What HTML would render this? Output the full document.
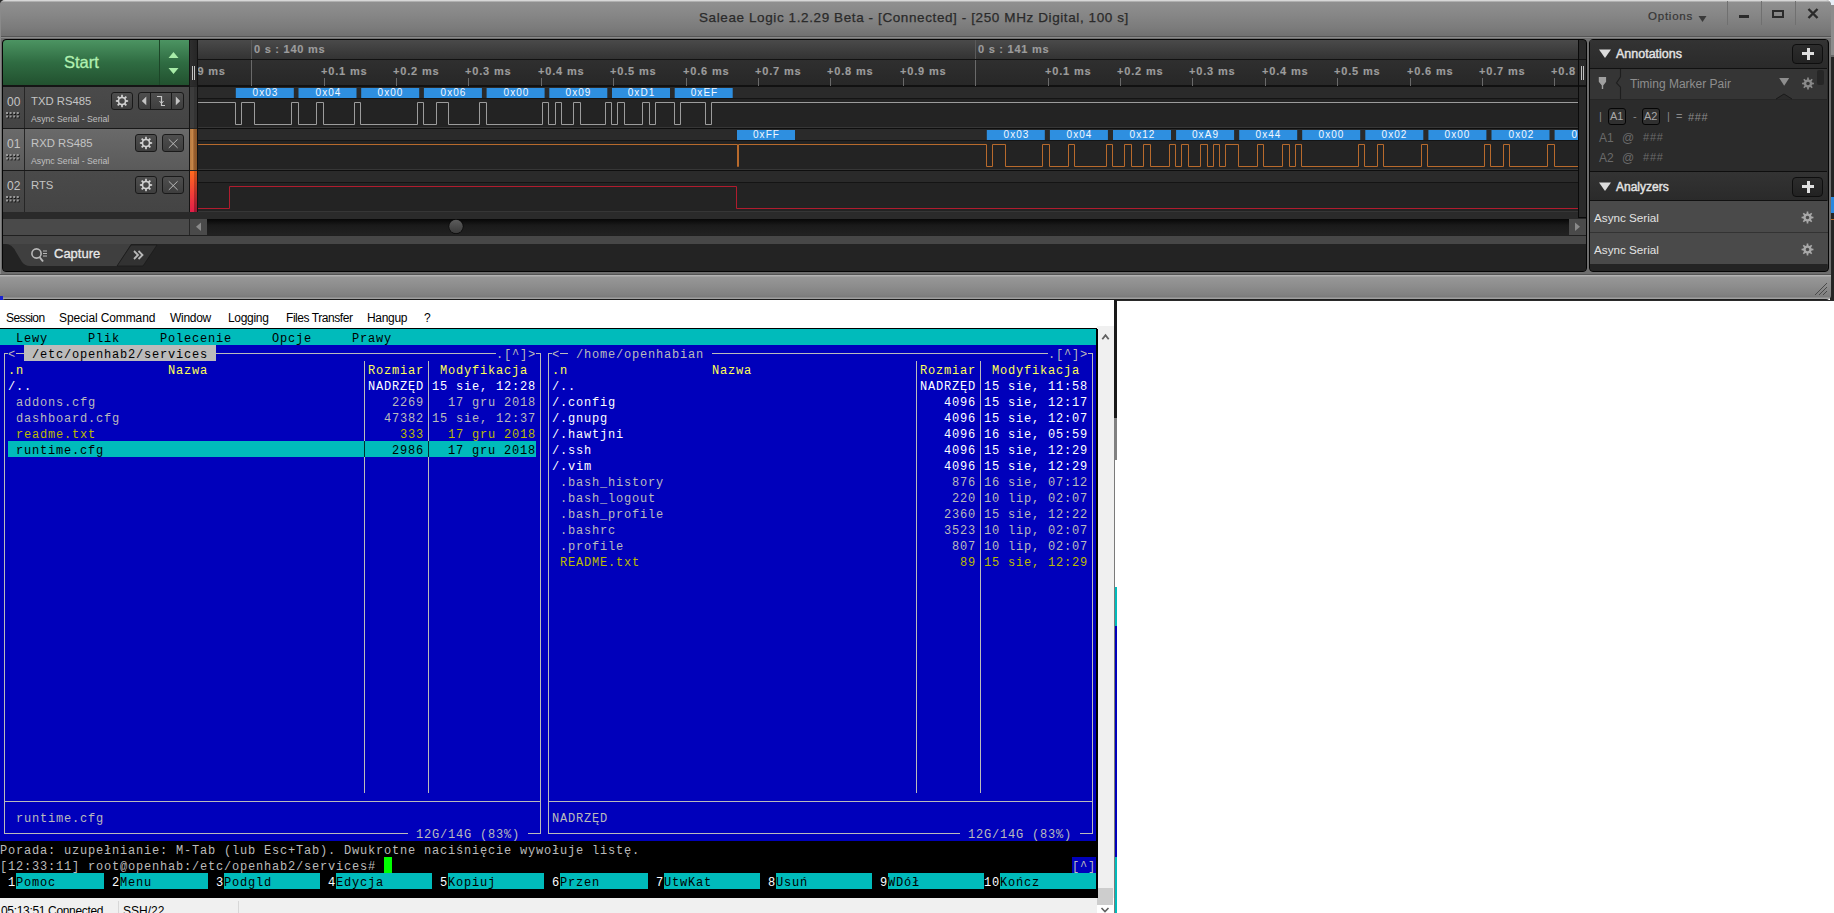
<!DOCTYPE html><html><head><meta charset="utf-8"><style>
*{margin:0;padding:0;box-sizing:border-box}
html,body{width:1834px;height:913px;overflow:hidden;background:#fff}
body{position:relative;font-family:"Liberation Sans",sans-serif}
.a{position:absolute}
.t{position:absolute;white-space:pre;line-height:1}
.m{font-family:"Liberation Mono",monospace}
svg{position:absolute;overflow:visible}
</style></head><body>
<div class="a" style="left:1830px;top:0px;width:4px;height:300px;background:#242424"></div>
<div class="a" style="left:1830px;top:5px;width:4px;height:50px;background:#8c8c8c"></div>
<div class="a" style="left:1830px;top:0px;width:4px;height:5px;background:#e6eef6"></div>
<div class="a" style="left:0px;top:0px;width:4px;height:4px;background:#2a2a2a"></div>
<div class="a" style="left:1831px;top:197px;width:3px;height:16px;background:#2a88e0"></div>
<div class="a" style="left:1831px;top:219px;width:3px;height:1px;background:#b86a2c"></div>
<div class="a" style="left:1831px;top:55px;width:3px;height:2px;background:#6a6a6a"></div>
<div class="a" style="left:0;top:0;width:1831px;height:300px;border-radius:5px 5px 5px 5px;overflow:hidden;background:#6e6e6e">
<div class="a" style="left:0px;top:0px;width:1831px;height:39px;background:linear-gradient(#dcdcdc 0px,#d0d0d0 1px,#8f8f8f 2px,#878787 14px,#7b7b7b 28px,#717171 35.5px,#555 36px,#555 37px,#8a8a8a 37px,#8a8a8a 38px,#6e6e6e 38px)"></div>
<div class="a" style="left:0px;top:0px;width:1px;height:300px;background:#8a8a8a"></div>
<div class="t" style="left:699px;top:10.5px;font-size:13.5px;letter-spacing:0.6px;color:#2a2a2a;-webkit-text-stroke:0.25px #2a2a2a">Saleae Logic 1.2.29 Beta - [Connected] - [250 MHz Digital, 100 s]</div>
<div class="t" style="left:1648px;top:11.3px;font-size:11.5px;letter-spacing:0.77px;color:#363636;-webkit-text-stroke:0.2px #363636">Options</div>
<svg style="left:1698px;top:15px" width="10" height="8"><path d="M0.5,1 L8.5,1 L4.5,7Z" fill="#3a3a3a"/></svg>
<div class="a" style="left:1727px;top:1px;width:1px;height:24px;background:#707070"></div>
<div class="a" style="left:1761px;top:1px;width:1px;height:24px;background:#707070"></div>
<div class="a" style="left:1795px;top:1px;width:1px;height:24px;background:#707070"></div>
<div class="a" style="left:1739px;top:15px;width:10px;height:3px;background:#2a2a2a"></div>
<div class="a" style="left:1772px;top:10px;width:12px;height:8px;border:2px solid #2a2a2a"></div>
<svg style="left:1806px;top:7px" width="14" height="13"><path d="M2.5,2 L11.5,11 M11.5,2 L2.5,11" stroke="#2a2a2a" stroke-width="2.4"/></svg>
<div class="a" style="left:0px;top:274px;width:1831px;height:26px;background:linear-gradient(#555 0px,#555 1px,#b4b4b4 1px,#b0b0b0 2px,#979797 3px,#8d8d8d 12px,#818181 21px,#7a7a7a 23px,#a0a0a0 24px,#a0a0a0 24.5px,#1e1e1e 25px)"></div>
<div class="a" style="left:2px;top:39px;width:1585px;height:233px;background:#262626;border:1px solid #050505;border-radius:4px"></div>
<div class="a" style="left:1589px;top:39px;width:240px;height:233px;background:#2b2b2b;border:1px solid #050505;border-radius:4px"></div>
</div>
<div class="a" style="left:3px;top:40px;width:186px;height:45px;background:linear-gradient(#4c9462,#2f6c42 50%,#22512f);border-radius:4px 0 0 0"></div>
<div class="a" style="left:158.5px;top:40px;width:1.2px;height:45px;background:#1c4628"></div>
<div class="t" style="left:64px;top:53.5px;font-size:16.5px;color:#b0f0b0;-webkit-text-stroke:0.3px #b0f0b0">Start</div>
<svg style="left:168px;top:51px" width="12" height="24"><path d="M0.5,7 L10.5,7 L5.5,1Z M0.5,17 L10.5,17 L5.5,23Z" fill="#a8eca8"/></svg>
<div class="a" style="left:3px;top:85px;width:186px;height:2px;background:#151515"></div>
<div class="a" style="left:3px;top:87px;width:186px;height:41px;background:linear-gradient(#4a4a4a,#444)"></div>
<div class="a" style="left:3px;top:128px;width:186px;height:1px;background:#181818"></div>
<div class="a" style="left:24px;top:87px;width:1px;height:41px;background:#262626"></div>
<div class="t" style="left:7px;top:96px;font-size:12px;color:#c4c4c4">00</div>
<svg style="left:6px;top:112px" width="16" height="8"><rect x="0.8" y="0.8" width="2" height="2" fill="#101010"/><rect x="0.0" y="0.0" width="2" height="2" fill="#9a9a9a"/><rect x="0.8" y="4.3" width="2" height="2" fill="#101010"/><rect x="0.0" y="3.5" width="2" height="2" fill="#9a9a9a"/><rect x="4.4" y="0.8" width="2" height="2" fill="#101010"/><rect x="3.6" y="0.0" width="2" height="2" fill="#9a9a9a"/><rect x="4.4" y="4.3" width="2" height="2" fill="#101010"/><rect x="3.6" y="3.5" width="2" height="2" fill="#9a9a9a"/><rect x="8.0" y="0.8" width="2" height="2" fill="#101010"/><rect x="7.2" y="0.0" width="2" height="2" fill="#9a9a9a"/><rect x="8.0" y="4.3" width="2" height="2" fill="#101010"/><rect x="7.2" y="3.5" width="2" height="2" fill="#9a9a9a"/><rect x="11.600000000000001" y="0.8" width="2" height="2" fill="#101010"/><rect x="10.8" y="0.0" width="2" height="2" fill="#9a9a9a"/><rect x="11.600000000000001" y="4.3" width="2" height="2" fill="#101010"/><rect x="10.8" y="3.5" width="2" height="2" fill="#9a9a9a"/></svg>
<div class="t" style="left:31px;top:96px;font-size:11.3px;color:#c4c4c4">TXD RS485</div>
<div class="t" style="left:31px;top:115px;font-size:8.7px;color:#c0c0c0">Async Serial - Serial</div>
<div class="a" style="left:111px;top:92px;width:22px;height:18px;background:linear-gradient(#4e4e4e,#3e3e3e);border:1px solid #1a1a1a;border-radius:3px"></div>
<svg style="left:0;top:0" width="1" height="1"><path d="M121.09,96.76 L121.17,94.86 L122.83,94.86 L122.91,96.76 L124.35,97.35 L125.76,96.07 L126.93,97.24 L125.65,98.65 L126.24,100.09 L128.14,100.17 L128.14,101.83 L126.24,101.91 L125.65,103.35 L126.93,104.76 L125.76,105.93 L124.35,104.65 L122.91,105.24 L122.83,107.14 L121.17,107.14 L121.09,105.24 L119.65,104.65 L118.24,105.93 L117.07,104.76 L118.35,103.35 L117.76,101.91 L115.86,101.83 L115.86,100.17 L117.76,100.09 L118.35,98.65 L117.07,97.24 L118.24,96.07 L119.65,97.35Z M124.73,101.00 A2.73,2.73 0 1 0 119.27,101.00 A2.73,2.73 0 1 0 124.73,101.00Z" fill="#d0d0d0" fill-rule="evenodd"/></svg>
<div class="a" style="left:138px;top:92px;width:46px;height:18px;background:linear-gradient(#4e4e4e,#3e3e3e);border:1px solid #1a1a1a;border-radius:3px"></div>
<div class="a" style="left:150px;top:93px;width:1px;height:16px;background:#1a1a1a"></div>
<div class="a" style="left:171px;top:93px;width:1px;height:16px;background:#1a1a1a"></div>
<svg style="left:0;top:0" width="1" height="1"><path d="M146.3,96.6 L146.3,105.2 L141.8,100.9Z M175.8,96.6 L175.8,105.2 L180.2,100.9Z" fill="#c4c4c4"/><path d="M157,96.5 L161.5,96.5 L161.5,105.5 L165,105.5" fill="none" stroke="#c8c8c8" stroke-width="1.2"/><path d="M159.5,101 L161.5,103.5 L163.5,101" fill="none" stroke="#c8c8c8" stroke-width="1"/></svg>
<div class="a" style="left:3px;top:129px;width:186px;height:41px;background:linear-gradient(#6a6a6a,#5a5a5a)"></div>
<div class="a" style="left:3px;top:170px;width:186px;height:1px;background:#181818"></div>
<div class="a" style="left:24px;top:129px;width:1px;height:41px;background:#262626"></div>
<div class="t" style="left:7px;top:138px;font-size:12px;color:#c4c4c4">01</div>
<svg style="left:6px;top:154px" width="16" height="8"><rect x="0.8" y="0.8" width="2" height="2" fill="#101010"/><rect x="0.0" y="0.0" width="2" height="2" fill="#9a9a9a"/><rect x="0.8" y="4.3" width="2" height="2" fill="#101010"/><rect x="0.0" y="3.5" width="2" height="2" fill="#9a9a9a"/><rect x="4.4" y="0.8" width="2" height="2" fill="#101010"/><rect x="3.6" y="0.0" width="2" height="2" fill="#9a9a9a"/><rect x="4.4" y="4.3" width="2" height="2" fill="#101010"/><rect x="3.6" y="3.5" width="2" height="2" fill="#9a9a9a"/><rect x="8.0" y="0.8" width="2" height="2" fill="#101010"/><rect x="7.2" y="0.0" width="2" height="2" fill="#9a9a9a"/><rect x="8.0" y="4.3" width="2" height="2" fill="#101010"/><rect x="7.2" y="3.5" width="2" height="2" fill="#9a9a9a"/><rect x="11.600000000000001" y="0.8" width="2" height="2" fill="#101010"/><rect x="10.8" y="0.0" width="2" height="2" fill="#9a9a9a"/><rect x="11.600000000000001" y="4.3" width="2" height="2" fill="#101010"/><rect x="10.8" y="3.5" width="2" height="2" fill="#9a9a9a"/></svg>
<div class="t" style="left:31px;top:138px;font-size:11.3px;color:#c4c4c4">RXD RS485</div>
<div class="t" style="left:31px;top:157px;font-size:8.7px;color:#c0c0c0">Async Serial - Serial</div>
<div class="a" style="left:135px;top:134px;width:22px;height:18px;background:linear-gradient(#4e4e4e,#3e3e3e);border:1px solid #1a1a1a;border-radius:3px"></div>
<svg style="left:0;top:0" width="1" height="1"><path d="M145.09,138.76 L145.17,136.86 L146.83,136.86 L146.91,138.76 L148.35,139.35 L149.76,138.07 L150.93,139.24 L149.65,140.65 L150.24,142.09 L152.14,142.17 L152.14,143.83 L150.24,143.91 L149.65,145.35 L150.93,146.76 L149.76,147.93 L148.35,146.65 L146.91,147.24 L146.83,149.14 L145.17,149.14 L145.09,147.24 L143.65,146.65 L142.24,147.93 L141.07,146.76 L142.35,145.35 L141.76,143.91 L139.86,143.83 L139.86,142.17 L141.76,142.09 L142.35,140.65 L141.07,139.24 L142.24,138.07 L143.65,139.35Z M148.73,143.00 A2.73,2.73 0 1 0 143.27,143.00 A2.73,2.73 0 1 0 148.73,143.00Z" fill="#d0d0d0" fill-rule="evenodd"/></svg>
<div class="a" style="left:162px;top:134px;width:22px;height:18px;background:linear-gradient(#4e4e4e,#3e3e3e);border:1px solid #1a1a1a;border-radius:3px"></div>
<svg style="left:0;top:0" width="1" height="1"><path d="M168.8,139.3 L177.6,147.9 M177.6,139.3 L168.8,147.9" stroke="#c4c4c4" stroke-width="0.9"/></svg>
<div class="a" style="left:3px;top:171px;width:186px;height:41px;background:linear-gradient(#4a4a4a,#444)"></div>
<div class="a" style="left:3px;top:212px;width:186px;height:1px;background:#181818"></div>
<div class="a" style="left:24px;top:171px;width:1px;height:41px;background:#262626"></div>
<div class="t" style="left:7px;top:180px;font-size:12px;color:#c4c4c4">02</div>
<svg style="left:6px;top:196px" width="16" height="8"><rect x="0.8" y="0.8" width="2" height="2" fill="#101010"/><rect x="0.0" y="0.0" width="2" height="2" fill="#9a9a9a"/><rect x="0.8" y="4.3" width="2" height="2" fill="#101010"/><rect x="0.0" y="3.5" width="2" height="2" fill="#9a9a9a"/><rect x="4.4" y="0.8" width="2" height="2" fill="#101010"/><rect x="3.6" y="0.0" width="2" height="2" fill="#9a9a9a"/><rect x="4.4" y="4.3" width="2" height="2" fill="#101010"/><rect x="3.6" y="3.5" width="2" height="2" fill="#9a9a9a"/><rect x="8.0" y="0.8" width="2" height="2" fill="#101010"/><rect x="7.2" y="0.0" width="2" height="2" fill="#9a9a9a"/><rect x="8.0" y="4.3" width="2" height="2" fill="#101010"/><rect x="7.2" y="3.5" width="2" height="2" fill="#9a9a9a"/><rect x="11.600000000000001" y="0.8" width="2" height="2" fill="#101010"/><rect x="10.8" y="0.0" width="2" height="2" fill="#9a9a9a"/><rect x="11.600000000000001" y="4.3" width="2" height="2" fill="#101010"/><rect x="10.8" y="3.5" width="2" height="2" fill="#9a9a9a"/></svg>
<div class="t" style="left:31px;top:180px;font-size:11.3px;color:#c4c4c4">RTS</div>
<div class="a" style="left:135px;top:176px;width:22px;height:18px;background:linear-gradient(#4e4e4e,#3e3e3e);border:1px solid #1a1a1a;border-radius:3px"></div>
<svg style="left:0;top:0" width="1" height="1"><path d="M145.09,180.76 L145.17,178.86 L146.83,178.86 L146.91,180.76 L148.35,181.35 L149.76,180.07 L150.93,181.24 L149.65,182.65 L150.24,184.09 L152.14,184.17 L152.14,185.83 L150.24,185.91 L149.65,187.35 L150.93,188.76 L149.76,189.93 L148.35,188.65 L146.91,189.24 L146.83,191.14 L145.17,191.14 L145.09,189.24 L143.65,188.65 L142.24,189.93 L141.07,188.76 L142.35,187.35 L141.76,185.91 L139.86,185.83 L139.86,184.17 L141.76,184.09 L142.35,182.65 L141.07,181.24 L142.24,180.07 L143.65,181.35Z M148.73,185.00 A2.73,2.73 0 1 0 143.27,185.00 A2.73,2.73 0 1 0 148.73,185.00Z" fill="#d0d0d0" fill-rule="evenodd"/></svg>
<div class="a" style="left:162px;top:176px;width:22px;height:18px;background:linear-gradient(#4e4e4e,#3e3e3e);border:1px solid #1a1a1a;border-radius:3px"></div>
<svg style="left:0;top:0" width="1" height="1"><path d="M168.8,181.3 L177.6,189.9 M177.6,181.3 L168.8,189.9" stroke="#c4c4c4" stroke-width="0.9"/></svg>
<div class="a" style="left:3px;top:212px;width:186px;height:7px;background:#2a2a2a"></div>
<div class="a" style="left:3px;top:219px;width:186px;height:16px;background:#4a4a4a"></div>
<div class="a" style="left:3px;top:235px;width:1583px;height:1px;background:#202020"></div>
<div class="a" style="left:3px;top:236px;width:1583px;height:8px;background:#474747"></div>
<div class="a" style="left:189px;top:40px;width:1px;height:172px;background:#151515"></div>
<div class="a" style="left:190px;top:40px;width:7px;height:46px;background:linear-gradient(90deg,#2e2e2e,#262626)"></div>
<div class="a" style="left:191.5px;top:66px;width:1.2px;height:14px;background:#c4c4c4"></div>
<div class="a" style="left:194px;top:66px;width:1.2px;height:14px;background:#c4c4c4"></div>
<div class="a" style="left:190px;top:87px;width:7px;height:41px;background:linear-gradient(90deg,#3c3c3c 0,#3c3c3c 50%,#333 50%,#333)"></div>
<div class="a" style="left:190px;top:129px;width:7px;height:41px;background:linear-gradient(90deg,#b87a40 0,#c8884a 40%,#9a6030 55%,#8a5628)"></div>
<div class="a" style="left:190px;top:171px;width:7px;height:41px;background:linear-gradient(#ff6a1e,#f03a3a 60%,#e41e48)"></div>
<div class="a" style="left:194px;top:171px;width:3px;height:41px;background:linear-gradient(rgba(0,0,0,0.18),rgba(0,0,0,0.3))"></div>
<div class="a" style="left:197px;top:40px;width:1px;height:172px;background:#111"></div>
<div class="a" style="left:198px;top:40px;width:1380px;height:19px;background:linear-gradient(#4a4a4a,#333)"></div>
<div class="a" style="left:198px;top:59px;width:1380px;height:1px;background:#121212"></div>
<div class="a" style="left:198px;top:60px;width:1380px;height:26px;background:linear-gradient(#2f2f2f,#272727)"></div>
<div class="a" style="left:198px;top:85px;width:1380px;height:2px;background:#111"></div>
<div class="a" style="left:251px;top:40px;width:1px;height:19px;background:#5a5a5a"></div>
<div class="a" style="left:975px;top:40px;width:1px;height:19px;background:#5a5a5a"></div>
<div class="a" style="left:251px;top:60px;width:1px;height:26px;background:#6a6a6a"></div>
<div class="a" style="left:975px;top:60px;width:1px;height:26px;background:#6a6a6a"></div>
<div class="a" style="left:198px;top:40px;width:1380px;height:46px;overflow:hidden">
<div class="t" style="left:56px;top:4.299999999999997px;font-size:11px;font-weight:bold;letter-spacing:0.75px;color:#9c9c9c;-webkit-text-stroke:0.15px #9c9c9c">0 s : 140 ms</div>
<div class="t" style="left:780px;top:4.299999999999997px;font-size:11px;font-weight:bold;letter-spacing:0.75px;color:#9c9c9c;-webkit-text-stroke:0.15px #9c9c9c">0 s : 141 ms</div>
<div class="t" style="left:-0.5px;top:26.299999999999997px;font-size:11px;font-weight:bold;letter-spacing:0.8px;color:#9c9c9c;-webkit-text-stroke:0.15px #9c9c9c">9 ms</div>
<div class="a" style="left:126px;top:38px;width:1px;height:8px;background:#6a6a6a"></div>
<div class="t" style="left:123px;top:26.299999999999997px;font-size:11px;font-weight:bold;letter-spacing:0.83px;color:#9c9c9c;-webkit-text-stroke:0.15px #9c9c9c">+0.1 ms</div>
<div class="a" style="left:198px;top:38px;width:1px;height:8px;background:#6a6a6a"></div>
<div class="t" style="left:195px;top:26.299999999999997px;font-size:11px;font-weight:bold;letter-spacing:0.83px;color:#9c9c9c;-webkit-text-stroke:0.15px #9c9c9c">+0.2 ms</div>
<div class="a" style="left:270px;top:38px;width:1px;height:8px;background:#6a6a6a"></div>
<div class="t" style="left:267px;top:26.299999999999997px;font-size:11px;font-weight:bold;letter-spacing:0.83px;color:#9c9c9c;-webkit-text-stroke:0.15px #9c9c9c">+0.3 ms</div>
<div class="a" style="left:343px;top:38px;width:1px;height:8px;background:#6a6a6a"></div>
<div class="t" style="left:340px;top:26.299999999999997px;font-size:11px;font-weight:bold;letter-spacing:0.83px;color:#9c9c9c;-webkit-text-stroke:0.15px #9c9c9c">+0.4 ms</div>
<div class="a" style="left:415px;top:38px;width:1px;height:8px;background:#6a6a6a"></div>
<div class="t" style="left:412px;top:26.299999999999997px;font-size:11px;font-weight:bold;letter-spacing:0.83px;color:#9c9c9c;-webkit-text-stroke:0.15px #9c9c9c">+0.5 ms</div>
<div class="a" style="left:488px;top:38px;width:1px;height:8px;background:#6a6a6a"></div>
<div class="t" style="left:485px;top:26.299999999999997px;font-size:11px;font-weight:bold;letter-spacing:0.83px;color:#9c9c9c;-webkit-text-stroke:0.15px #9c9c9c">+0.6 ms</div>
<div class="a" style="left:560px;top:38px;width:1px;height:8px;background:#6a6a6a"></div>
<div class="t" style="left:557px;top:26.299999999999997px;font-size:11px;font-weight:bold;letter-spacing:0.83px;color:#9c9c9c;-webkit-text-stroke:0.15px #9c9c9c">+0.7 ms</div>
<div class="a" style="left:632px;top:38px;width:1px;height:8px;background:#6a6a6a"></div>
<div class="t" style="left:629px;top:26.299999999999997px;font-size:11px;font-weight:bold;letter-spacing:0.83px;color:#9c9c9c;-webkit-text-stroke:0.15px #9c9c9c">+0.8 ms</div>
<div class="a" style="left:705px;top:38px;width:1px;height:8px;background:#6a6a6a"></div>
<div class="t" style="left:702px;top:26.299999999999997px;font-size:11px;font-weight:bold;letter-spacing:0.83px;color:#9c9c9c;-webkit-text-stroke:0.15px #9c9c9c">+0.9 ms</div>
<div class="a" style="left:850px;top:38px;width:1px;height:8px;background:#6a6a6a"></div>
<div class="t" style="left:847px;top:26.299999999999997px;font-size:11px;font-weight:bold;letter-spacing:0.83px;color:#9c9c9c;-webkit-text-stroke:0.15px #9c9c9c">+0.1 ms</div>
<div class="a" style="left:922px;top:38px;width:1px;height:8px;background:#6a6a6a"></div>
<div class="t" style="left:919px;top:26.299999999999997px;font-size:11px;font-weight:bold;letter-spacing:0.83px;color:#9c9c9c;-webkit-text-stroke:0.15px #9c9c9c">+0.2 ms</div>
<div class="a" style="left:994px;top:38px;width:1px;height:8px;background:#6a6a6a"></div>
<div class="t" style="left:991px;top:26.299999999999997px;font-size:11px;font-weight:bold;letter-spacing:0.83px;color:#9c9c9c;-webkit-text-stroke:0.15px #9c9c9c">+0.3 ms</div>
<div class="a" style="left:1067px;top:38px;width:1px;height:8px;background:#6a6a6a"></div>
<div class="t" style="left:1064px;top:26.299999999999997px;font-size:11px;font-weight:bold;letter-spacing:0.83px;color:#9c9c9c;-webkit-text-stroke:0.15px #9c9c9c">+0.4 ms</div>
<div class="a" style="left:1139px;top:38px;width:1px;height:8px;background:#6a6a6a"></div>
<div class="t" style="left:1136px;top:26.299999999999997px;font-size:11px;font-weight:bold;letter-spacing:0.83px;color:#9c9c9c;-webkit-text-stroke:0.15px #9c9c9c">+0.5 ms</div>
<div class="a" style="left:1212px;top:38px;width:1px;height:8px;background:#6a6a6a"></div>
<div class="t" style="left:1209px;top:26.299999999999997px;font-size:11px;font-weight:bold;letter-spacing:0.83px;color:#9c9c9c;-webkit-text-stroke:0.15px #9c9c9c">+0.6 ms</div>
<div class="a" style="left:1284px;top:38px;width:1px;height:8px;background:#6a6a6a"></div>
<div class="t" style="left:1281px;top:26.299999999999997px;font-size:11px;font-weight:bold;letter-spacing:0.83px;color:#9c9c9c;-webkit-text-stroke:0.15px #9c9c9c">+0.7 ms</div>
<div class="a" style="left:1356px;top:38px;width:1px;height:8px;background:#6a6a6a"></div>
<div class="t" style="left:1353px;top:26.299999999999997px;font-size:11px;font-weight:bold;letter-spacing:0.83px;color:#9c9c9c;-webkit-text-stroke:0.15px #9c9c9c">+0.8 ms</div>
</div>
<div class="a" style="left:1578px;top:40px;width:8px;height:172px;background:#2a2a2a;border-radius:0 4px 0 0"></div>
<div class="a" style="left:1578px;top:59px;width:8px;height:1px;background:#121212"></div>
<div class="a" style="left:1578px;top:85px;width:8px;height:2px;background:#111"></div>
<div class="a" style="left:1581px;top:66px;width:1px;height:14px;background:#c0c0c0"></div>
<div class="a" style="left:1583px;top:66px;width:1px;height:14px;background:#c0c0c0"></div>
<div class="a" style="left:1578px;top:40px;width:1px;height:178px;background:#0a0a0a"></div>
<div class="a" style="left:1578px;top:217px;width:8px;height:1px;background:#0a0a0a"></div>
<div class="a" style="left:198px;top:87px;width:1380px;height:11px;background:#2a2a2a"></div>
<div class="a" style="left:198px;top:98px;width:1380px;height:1px;background:#141414"></div>
<div class="a" style="left:198px;top:99px;width:1380px;height:28px;background:#232323"></div>
<div class="a" style="left:198px;top:127px;width:1380px;height:1px;background:#363636"></div>
<div class="a" style="left:198px;top:128px;width:1380px;height:1px;background:#0e0e0e"></div>
<div class="a" style="left:198px;top:129px;width:1380px;height:11px;background:#2a2a2a"></div>
<div class="a" style="left:198px;top:140px;width:1380px;height:1px;background:#141414"></div>
<div class="a" style="left:198px;top:141px;width:1380px;height:28px;background:#232323"></div>
<div class="a" style="left:198px;top:169px;width:1380px;height:1px;background:#363636"></div>
<div class="a" style="left:198px;top:170px;width:1380px;height:1px;background:#0e0e0e"></div>
<div class="a" style="left:198px;top:171px;width:1380px;height:11px;background:#2a2a2a"></div>
<div class="a" style="left:198px;top:182px;width:1380px;height:1px;background:#141414"></div>
<div class="a" style="left:198px;top:183px;width:1380px;height:28px;background:#232323"></div>
<div class="a" style="left:198px;top:211px;width:1380px;height:1px;background:#363636"></div>
<div class="a" style="left:198px;top:212px;width:1380px;height:1px;background:#0e0e0e"></div>
<svg style="left:0;top:0" width="1834" height="300"><defs><clipPath id="tlc"><rect x="198" y="40" width="1380" height="172"/></clipPath></defs><g clip-path="url(#tlc)"><path d="M198,102.5 L235.5,102.5 L235.5,124.5 L241.5,124.5 L241.5,102.5 L254.5,102.5 L254.5,124.5 L291.5,124.5 L291.5,102.5 L298.5,102.5 L298.5,124.5 L316.5,124.5 L316.5,102.5 L323.5,102.5 L323.5,124.5 L354.5,124.5 L354.5,102.5 L360.5,102.5 L360.5,124.5 L417.5,124.5 L417.5,102.5 L423.5,102.5 L423.5,124.5 L436.5,124.5 L436.5,102.5 L448.5,102.5 L448.5,124.5 L479.5,124.5 L479.5,102.5 L486.5,102.5 L486.5,124.5 L542.5,124.5 L542.5,102.5 L548.5,102.5 L548.5,124.5 L555.5,124.5 L555.5,102.5 L561.5,102.5 L561.5,124.5 L573.5,124.5 L573.5,102.5 L580.5,102.5 L580.5,124.5 L605.5,124.5 L605.5,102.5 L611.5,102.5 L611.5,124.5 L617.5,124.5 L617.5,102.5 L624.5,102.5 L624.5,124.5 L642.5,124.5 L642.5,102.5 L649.5,102.5 L649.5,124.5 L655.5,124.5 L655.5,102.5 L674.5,102.5 L674.5,124.5 L680.5,124.5 L680.5,102.5 L705.5,102.5 L705.5,124.5 L711.5,124.5 L711.5,102.5 L1578,102.5" fill="none" stroke="#9c9c9c" stroke-width="1"/><path d="M198,144.5 L737.5,144.5 L737.5,166.5 L738.5,166.5 L738.5,144.5 L986.5,144.5 L986.5,166.5 L992.5,166.5 L992.5,144.5 L1005.5,144.5 L1005.5,166.5 L1042.5,166.5 L1042.5,144.5 L1049.5,144.5 L1049.5,166.5 L1068.5,166.5 L1068.5,144.5 L1074.5,144.5 L1074.5,166.5 L1106.5,166.5 L1106.5,144.5 L1112.5,144.5 L1112.5,166.5 L1124.5,166.5 L1124.5,144.5 L1131.5,144.5 L1131.5,166.5 L1143.5,166.5 L1143.5,144.5 L1150.5,144.5 L1150.5,166.5 L1169.5,166.5 L1169.5,144.5 L1175.5,144.5 L1175.5,166.5 L1181.5,166.5 L1181.5,144.5 L1188.5,144.5 L1188.5,166.5 L1200.5,166.5 L1200.5,144.5 L1207.5,144.5 L1207.5,166.5 L1213.5,166.5 L1213.5,144.5 L1219.5,144.5 L1219.5,166.5 L1225.5,166.5 L1225.5,144.5 L1238.5,144.5 L1238.5,166.5 L1257.5,166.5 L1257.5,144.5 L1263.5,144.5 L1263.5,166.5 L1282.5,166.5 L1282.5,144.5 L1289.5,144.5 L1289.5,166.5 L1295.5,166.5 L1295.5,144.5 L1301.5,144.5 L1301.5,166.5 L1358.5,166.5 L1358.5,144.5 L1364.5,144.5 L1364.5,166.5 L1377.5,166.5 L1377.5,144.5 L1383.5,144.5 L1383.5,166.5 L1421.5,166.5 L1421.5,144.5 L1427.5,144.5 L1427.5,166.5 L1484.5,166.5 L1484.5,144.5 L1490.5,144.5 L1490.5,166.5 L1503.5,166.5 L1503.5,144.5 L1509.5,144.5 L1509.5,166.5 L1547.5,166.5 L1547.5,144.5 L1554.5,144.5 L1554.5,166.5 L1578,166.5" fill="none" stroke="#b86a2c" stroke-width="1"/><path d="M198,208.5 L229.5,208.5 L229.5,186.5 L736.5,186.5 L736.5,208.5 L1578,208.5" fill="none" stroke="#b01c2e" stroke-width="1"/><rect x="235.8" y="88" width="58" height="10" fill="#2e8fe0"/><rect x="298.5" y="88" width="58" height="10" fill="#2e8fe0"/><rect x="361.2" y="88" width="58" height="10" fill="#2e8fe0"/><rect x="423.9" y="88" width="58" height="10" fill="#2e8fe0"/><rect x="486.6" y="88" width="58" height="10" fill="#2e8fe0"/><rect x="549.3" y="88" width="58" height="10" fill="#2e8fe0"/><rect x="612.0" y="88" width="58" height="10" fill="#2e8fe0"/><rect x="674.7" y="88" width="58" height="10" fill="#2e8fe0"/><rect x="737.0" y="130" width="58" height="10" fill="#2e8fe0"/><rect x="986.8" y="130" width="58" height="10" fill="#2e8fe0"/><rect x="1049.9" y="130" width="58" height="10" fill="#2e8fe0"/><rect x="1113.0" y="130" width="58" height="10" fill="#2e8fe0"/><rect x="1176.1" y="130" width="58" height="10" fill="#2e8fe0"/><rect x="1239.2" y="130" width="58" height="10" fill="#2e8fe0"/><rect x="1302.2" y="130" width="58" height="10" fill="#2e8fe0"/><rect x="1365.3" y="130" width="58" height="10" fill="#2e8fe0"/><rect x="1428.4" y="130" width="58" height="10" fill="#2e8fe0"/><rect x="1491.5" y="130" width="58" height="10" fill="#2e8fe0"/><rect x="1554.6" y="130" width="58" height="10" fill="#2e8fe0"/></g></svg>
<div class="a" style="left:198px;top:80px;width:1380px;height:70px;overflow:hidden">
<div class="t" style="left:52px;top:8px;width:30px;text-align:center;font-size:10px;color:#f4f8ff;letter-spacing:1.05px;text-indent:1px">0x03</div>
<div class="t" style="left:115px;top:8px;width:30px;text-align:center;font-size:10px;color:#f4f8ff;letter-spacing:1.05px;text-indent:1px">0x04</div>
<div class="t" style="left:177px;top:8px;width:30px;text-align:center;font-size:10px;color:#f4f8ff;letter-spacing:1.05px;text-indent:1px">0x00</div>
<div class="t" style="left:240px;top:8px;width:30px;text-align:center;font-size:10px;color:#f4f8ff;letter-spacing:1.05px;text-indent:1px">0x06</div>
<div class="t" style="left:303px;top:8px;width:30px;text-align:center;font-size:10px;color:#f4f8ff;letter-spacing:1.05px;text-indent:1px">0x00</div>
<div class="t" style="left:365px;top:8px;width:30px;text-align:center;font-size:10px;color:#f4f8ff;letter-spacing:1.05px;text-indent:1px">0x09</div>
<div class="t" style="left:428px;top:8px;width:30px;text-align:center;font-size:10px;color:#f4f8ff;letter-spacing:1.05px;text-indent:1px">0xD1</div>
<div class="t" style="left:491px;top:8px;width:30px;text-align:center;font-size:10px;color:#f4f8ff;letter-spacing:1.05px;text-indent:1px">0xEF</div>
<div class="t" style="left:553px;top:50px;width:30px;text-align:center;font-size:10px;color:#f4f8ff;letter-spacing:1.05px;text-indent:1px">0xFF</div>
<div class="t" style="left:803px;top:50px;width:30px;text-align:center;font-size:10px;color:#f4f8ff;letter-spacing:1.05px;text-indent:1px">0x03</div>
<div class="t" style="left:866px;top:50px;width:30px;text-align:center;font-size:10px;color:#f4f8ff;letter-spacing:1.05px;text-indent:1px">0x04</div>
<div class="t" style="left:929px;top:50px;width:30px;text-align:center;font-size:10px;color:#f4f8ff;letter-spacing:1.05px;text-indent:1px">0x12</div>
<div class="t" style="left:992px;top:50px;width:30px;text-align:center;font-size:10px;color:#f4f8ff;letter-spacing:1.05px;text-indent:1px">0xA9</div>
<div class="t" style="left:1055px;top:50px;width:30px;text-align:center;font-size:10px;color:#f4f8ff;letter-spacing:1.05px;text-indent:1px">0x44</div>
<div class="t" style="left:1118px;top:50px;width:30px;text-align:center;font-size:10px;color:#f4f8ff;letter-spacing:1.05px;text-indent:1px">0x00</div>
<div class="t" style="left:1181px;top:50px;width:30px;text-align:center;font-size:10px;color:#f4f8ff;letter-spacing:1.05px;text-indent:1px">0x02</div>
<div class="t" style="left:1244px;top:50px;width:30px;text-align:center;font-size:10px;color:#f4f8ff;letter-spacing:1.05px;text-indent:1px">0x00</div>
<div class="t" style="left:1308px;top:50px;width:30px;text-align:center;font-size:10px;color:#f4f8ff;letter-spacing:1.05px;text-indent:1px">0x02</div>
<div class="t" style="left:1371px;top:50px;width:30px;text-align:center;font-size:10px;color:#f4f8ff;letter-spacing:1.05px;text-indent:1px">0x00</div>
</div>
<div class="a" style="left:189px;top:212px;width:1389px;height:7px;background:#2a2a2a"></div>
<div class="a" style="left:1578px;top:212px;width:8px;height:5px;background:#2a2a2a"></div>
<div class="a" style="left:1578px;top:212px;width:1px;height:6px;background:#0a0a0a"></div>
<div class="a" style="left:1578px;top:217px;width:8px;height:1px;background:#0a0a0a"></div>
<div class="a" style="left:190px;top:219px;width:17px;height:16px;background:#4a4a4a"></div>
<div class="a" style="left:207px;top:219px;width:1362px;height:16px;background:linear-gradient(#070707,#1a1a1a 40%,#222)"></div>
<div class="a" style="left:1569px;top:219px;width:17px;height:16px;background:#4a4a4a"></div>
<svg style="left:0;top:0" width="1" height="1"><path d="M201,222.5 L201,231 L196,226.8Z" fill="#8a8a8a"/><path d="M1575,222.5 L1575,231 L1580,226.8Z" fill="#8a8a8a"/></svg>
<svg style="left:0;top:0" width="1" height="1"><defs><linearGradient id="kn" x1="0" y1="0" x2="0" y2="1"><stop offset="0" stop-color="#5c5c5c"/><stop offset="1" stop-color="#3a3a3a"/></linearGradient></defs><circle cx="456" cy="226.5" r="7.5" fill="#0a0a0a"/><circle cx="456" cy="226.5" r="6.8" fill="url(#kn)"/></svg>
<div class="a" style="left:3px;top:244px;width:1583px;height:27px;background:#232323;border-radius:0 0 3px 3px"></div>
<svg style="left:0;top:0" width="1" height="1"><path d="M4,244 L6,244 Q12,244 16,252 L22,262 Q25,266 30,266 L117,266 L131,244Z" fill="#3f3f3f"/><path d="M131,245 L157,245 L143,266 L117,266Z" fill="#323232" stroke="#1a1a1a" stroke-width="0.8"/><circle cx="36.5" cy="253.5" r="4.6" fill="none" stroke="#b8b8b8" stroke-width="1.6"/><path d="M39.5,257 L43,261.5" stroke="#b8b8b8" stroke-width="2"/><path d="M43,251 L47,251 M43,253.5 L47,253.5 M43,256 L47,256" stroke="#b8b8b8" stroke-width="1"/><path d="M134,251 L138,255 L134,259 M138.5,251 L142.5,255 L138.5,259" fill="none" stroke="#b8b8b8" stroke-width="1.8"/></svg>
<div class="t" style="left:54px;top:247px;font-size:13px;color:#e8e8e8;-webkit-text-stroke:0.3px #e8e8e8">Capture</div>
<svg style="left:0;top:0" width="1" height="1"><path d="M1815,295 L1827,283 M1819,295 L1827,287 M1823,295 L1827,291" stroke="#4a4a4a" stroke-width="1"/></svg>
<div class="a" style="left:0px;top:296px;width:3px;height:4px;background:#1a22d0"></div>
<div class="a" style="left:1590px;top:40px;width:237px;height:28px;background:linear-gradient(#333,#2a2a2a)"></div>
<div class="a" style="left:1590px;top:68px;width:237px;height:1px;background:#111"></div>
<svg style="left:0;top:0" width="1" height="1"><path d="M1599,49.5 L1611,49.5 L1605,58Z" fill="#dcdcdc"/></svg>
<div class="t" style="left:1616px;top:47.5px;font-size:12.5px;color:#e4e4e4;-webkit-text-stroke:0.4px #e4e4e4">Annotations</div>
<div class="a" style="left:1792px;top:44px;width:31px;height:20px;background:linear-gradient(#2c2c2c,#222);border:1px solid #0e0e0e;border-radius:4px"></div>
<div class="a" style="left:1802px;top:52px;width:12px;height:3px;background:#e0e0e0"></div>
<div class="a" style="left:1806.5px;top:48px;width:3px;height:12px;background:#e0e0e0"></div>
<div class="a" style="left:1590px;top:69px;width:237px;height:30px;background:#353535"></div>
<div class="a" style="left:1590px;top:99px;width:237px;height:1px;background:#262626"></div>
<svg style="left:0;top:0" width="1" height="1"><path d="M1620.5,69 L1620.5,76.8 L1616.5,83 L1620.5,87.2 L1620.5,99" fill="none" stroke="#1e1e1e" stroke-width="1.1"/><path d="M1598.8,77 L1606.1,77 L1606.1,81.7 L1603.2,85.6 L1603.2,89 L1601.8,89 L1601.8,85.6 L1598.8,81.7Z" fill="#a0a0a0"/><path d="M1779.2,78 L1789.2,78 L1784.2,85.8Z" fill="#8e8e8e"/><path d="M1807.12,79.39 L1807.20,77.55 L1808.80,77.55 L1808.88,79.39 L1810.28,79.97 L1811.64,78.73 L1812.77,79.86 L1811.53,81.22 L1812.11,82.62 L1813.95,82.70 L1813.95,84.30 L1812.11,84.38 L1811.53,85.78 L1812.77,87.14 L1811.64,88.27 L1810.28,87.03 L1808.88,87.61 L1808.80,89.45 L1807.20,89.45 L1807.12,87.61 L1805.72,87.03 L1804.36,88.27 L1803.23,87.14 L1804.47,85.78 L1803.89,84.38 L1802.05,84.30 L1802.05,82.70 L1803.89,82.62 L1804.47,81.22 L1803.23,79.86 L1804.36,78.73 L1805.72,79.97Z M1809.80,83.50 A1.80,1.80 0 1 0 1806.20,83.50 A1.80,1.80 0 1 0 1809.80,83.50Z" fill="#8a8a8a" fill-rule="evenodd"/><path d="M1776,99 L1784,94 L1792,99" fill="#2b2b2b" stroke="#1a1a1a" stroke-width="1"/></svg>
<div class="t" style="left:1630px;top:78px;font-size:12px;color:#8e8e8e">Timing Marker Pair</div>
<div class="a" style="left:1817px;top:70px;width:7px;height:15px;background:#262626;border-radius:2px"></div>
<div class="a" style="left:1590px;top:100px;width:237px;height:72px;background:#2b2b2b"></div>
<div class="t" style="left:1599px;top:111px;font-size:11px;color:#8a8a8a">|</div>
<div class="a" style="left:1608px;top:108px;width:18px;height:17px;background:#303030;border:1.5px solid #050505;border-radius:3px"></div>
<div class="t" style="left:1610px;top:111px;font-size:11px;color:#a8a8a8">A1</div>
<div class="t" style="left:1633px;top:111px;font-size:11px;color:#8a8a8a">-</div>
<div class="a" style="left:1642px;top:108px;width:18px;height:17px;background:#303030;border:1.5px solid #050505;border-radius:3px"></div>
<div class="t" style="left:1644px;top:111px;font-size:11px;color:#a8a8a8">A2</div>
<div class="t" style="left:1667px;top:111px;font-size:11px;color:#8a8a8a">|</div>
<div class="t" style="left:1676px;top:111px;font-size:11px;color:#8a8a8a">=</div>
<div class="t" style="left:1688px;top:112px;font-size:11px;letter-spacing:0.6px;color:#8a8a8a">###</div>
<div class="t" style="left:1599px;top:132px;font-size:12px;color:#6a6a6a">A1</div>
<div class="t" style="left:1622px;top:132px;font-size:12px;color:#6a6a6a">@</div>
<div class="t" style="left:1643px;top:132px;font-size:11px;letter-spacing:0.8px;color:#6a6a6a">###</div>
<div class="t" style="left:1599px;top:152px;font-size:12px;color:#6a6a6a">A2</div>
<div class="t" style="left:1622px;top:152px;font-size:12px;color:#6a6a6a">@</div>
<div class="t" style="left:1643px;top:152px;font-size:11px;letter-spacing:0.8px;color:#6a6a6a">###</div>
<div class="a" style="left:1590px;top:172px;width:237px;height:29px;background:linear-gradient(#333,#2a2a2a)"></div>
<div class="a" style="left:1590px;top:171px;width:237px;height:1px;background:#0e0e0e"></div>
<div class="a" style="left:1590px;top:200px;width:237px;height:1px;background:#111"></div>
<svg style="left:0;top:0" width="1" height="1"><path d="M1599,182.5 L1611,182.5 L1605,191Z" fill="#dcdcdc"/></svg>
<div class="t" style="left:1616px;top:180.5px;font-size:12px;color:#e4e4e4;-webkit-text-stroke:0.4px #e4e4e4">Analyzers</div>
<div class="a" style="left:1792px;top:177px;width:31px;height:20px;background:linear-gradient(#2c2c2c,#222);border:1px solid #0e0e0e;border-radius:4px"></div>
<div class="a" style="left:1802px;top:185px;width:12px;height:3px;background:#e0e0e0"></div>
<div class="a" style="left:1806.5px;top:181px;width:3px;height:12px;background:#e0e0e0"></div>
<div class="a" style="left:1590px;top:201px;width:238px;height:31px;background:#4a4a4a"></div>
<div class="a" style="left:1590px;top:232px;width:238px;height:1px;background:#333"></div>
<div class="t" style="left:1594px;top:212px;font-size:11.7px;color:#e2e2e2">Async Serial</div>
<svg style="left:0;top:0" width="1" height="1"><path d="M1806.62,213.39 L1806.70,211.55 L1808.30,211.55 L1808.38,213.39 L1809.78,213.97 L1811.14,212.73 L1812.27,213.86 L1811.03,215.22 L1811.61,216.62 L1813.45,216.70 L1813.45,218.30 L1811.61,218.38 L1811.03,219.78 L1812.27,221.14 L1811.14,222.27 L1809.78,221.03 L1808.38,221.61 L1808.30,223.45 L1806.70,223.45 L1806.62,221.61 L1805.22,221.03 L1803.86,222.27 L1802.73,221.14 L1803.97,219.78 L1803.39,218.38 L1801.55,218.30 L1801.55,216.70 L1803.39,216.62 L1803.97,215.22 L1802.73,213.86 L1803.86,212.73 L1805.22,213.97Z M1809.30,217.50 A1.80,1.80 0 1 0 1805.70,217.50 A1.80,1.80 0 1 0 1809.30,217.50Z" fill="#a8a8a8" fill-rule="evenodd"/></svg>
<div class="a" style="left:1590px;top:233px;width:238px;height:31px;background:#4a4a4a"></div>
<div class="a" style="left:1590px;top:264px;width:238px;height:1px;background:#333"></div>
<div class="t" style="left:1594px;top:244px;font-size:11.7px;color:#e2e2e2">Async Serial</div>
<svg style="left:0;top:0" width="1" height="1"><path d="M1806.62,245.39 L1806.70,243.55 L1808.30,243.55 L1808.38,245.39 L1809.78,245.97 L1811.14,244.73 L1812.27,245.86 L1811.03,247.22 L1811.61,248.62 L1813.45,248.70 L1813.45,250.30 L1811.61,250.38 L1811.03,251.78 L1812.27,253.14 L1811.14,254.27 L1809.78,253.03 L1808.38,253.61 L1808.30,255.45 L1806.70,255.45 L1806.62,253.61 L1805.22,253.03 L1803.86,254.27 L1802.73,253.14 L1803.97,251.78 L1803.39,250.38 L1801.55,250.30 L1801.55,248.70 L1803.39,248.62 L1803.97,247.22 L1802.73,245.86 L1803.86,244.73 L1805.22,245.97Z M1809.30,249.50 A1.80,1.80 0 1 0 1805.70,249.50 A1.80,1.80 0 1 0 1809.30,249.50Z" fill="#a8a8a8" fill-rule="evenodd"/></svg>
<div class="a" style="left:1590px;top:264px;width:237px;height:7px;background:#242424;border-radius:0 0 4px 4px"></div>
<div class="a" style="left:0px;top:300px;width:1834px;height:613px;background:#ffffff"></div>
<div class="t" style="left:6px;top:312px;font-size:12px;letter-spacing:-0.6px;color:#000">Session</div>
<div class="t" style="left:59px;top:312px;font-size:12px;letter-spacing:-0.12px;color:#000">Special Command</div>
<div class="t" style="left:170px;top:312px;font-size:12px;letter-spacing:-0.3px;color:#000">Window</div>
<div class="t" style="left:228px;top:312px;font-size:12px;letter-spacing:-0.3px;color:#000">Logging</div>
<div class="t" style="left:286px;top:312px;font-size:12px;letter-spacing:-0.44px;color:#000">Files Transfer</div>
<div class="t" style="left:367px;top:312px;font-size:12px;letter-spacing:-0.3px;color:#000">Hangup</div>
<div class="t" style="left:424px;top:312px;font-size:12px;letter-spacing:0px;color:#000">?</div>
<div class="a" style="left:0px;top:328px;width:1097px;height:1px;background:#000"></div>
<div class="a" style="left:1097px;top:326px;width:17px;height:572px;background:#f0f0f0"></div>
<svg style="left:0;top:0" width="1" height="1"><path d="M1102.3,339.3 L1105.5,335.3 L1108.7,339.3" fill="none" stroke="#606060" stroke-width="1.8"/><path d="M1101.5,908 L1105,911.5 L1108.5,908" fill="none" stroke="#606060" stroke-width="1.6"/></svg>
<div class="a" style="left:1097px;top:888px;width:16px;height:17px;background:#cdcdcd"></div>
<div class="a" style="left:1114px;top:300px;width:1px;height:613px;background:#7a7a7a"></div>
<div class="a" style="left:1114px;top:300px;width:3px;height:118px;background:#1a1a1a"></div>
<div class="a" style="left:1114px;top:418px;width:3px;height:42px;background:#808080"></div>
<div class="a" style="left:1117px;top:300px;width:717px;height:1px;background:#2a2a2a"></div>
<div class="a" style="left:1115px;top:587px;width:2px;height:39px;background:#00bbbb"></div>
<div class="a" style="left:1115px;top:626px;width:2px;height:287px;background:#0000bb"></div>
<div class="a" style="left:1115px;top:857px;width:2px;height:56px;background:#00bbbb"></div>
<div class="a" style="left:0px;top:329px;width:1097px;height:569px;background:#000"></div>
<div class="a" style="left:0px;top:329px;width:1096px;height:16px;background:#00bbbb"></div><div class="a" style="left:0px;top:345px;width:24px;height:16px;background:#0000bb"></div><div class="a" style="left:24px;top:345px;width:192px;height:16px;background:#bbbbbb"></div><div class="a" style="left:216px;top:345px;width:880px;height:16px;background:#0000bb"></div><div class="a" style="left:0px;top:361px;width:1096px;height:16px;background:#0000bb"></div><div class="a" style="left:0px;top:377px;width:1096px;height:16px;background:#0000bb"></div><div class="a" style="left:0px;top:393px;width:1096px;height:16px;background:#0000bb"></div><div class="a" style="left:0px;top:409px;width:1096px;height:16px;background:#0000bb"></div><div class="a" style="left:0px;top:425px;width:1096px;height:16px;background:#0000bb"></div><div class="a" style="left:0px;top:441px;width:8px;height:16px;background:#0000bb"></div><div class="a" style="left:8px;top:441px;width:528px;height:16px;background:#00bbbb"></div><div class="a" style="left:536px;top:441px;width:560px;height:16px;background:#0000bb"></div><div class="a" style="left:0px;top:457px;width:1096px;height:16px;background:#0000bb"></div><div class="a" style="left:0px;top:473px;width:1096px;height:16px;background:#0000bb"></div><div class="a" style="left:0px;top:489px;width:1096px;height:16px;background:#0000bb"></div><div class="a" style="left:0px;top:505px;width:1096px;height:16px;background:#0000bb"></div><div class="a" style="left:0px;top:521px;width:1096px;height:16px;background:#0000bb"></div><div class="a" style="left:0px;top:537px;width:1096px;height:16px;background:#0000bb"></div><div class="a" style="left:0px;top:553px;width:1096px;height:16px;background:#0000bb"></div><div class="a" style="left:0px;top:569px;width:1096px;height:16px;background:#0000bb"></div><div class="a" style="left:0px;top:585px;width:1096px;height:16px;background:#0000bb"></div><div class="a" style="left:0px;top:601px;width:1096px;height:16px;background:#0000bb"></div><div class="a" style="left:0px;top:617px;width:1096px;height:16px;background:#0000bb"></div><div class="a" style="left:0px;top:633px;width:1096px;height:16px;background:#0000bb"></div><div class="a" style="left:0px;top:649px;width:1096px;height:16px;background:#0000bb"></div><div class="a" style="left:0px;top:665px;width:1096px;height:16px;background:#0000bb"></div><div class="a" style="left:0px;top:681px;width:1096px;height:16px;background:#0000bb"></div><div class="a" style="left:0px;top:697px;width:1096px;height:16px;background:#0000bb"></div><div class="a" style="left:0px;top:713px;width:1096px;height:16px;background:#0000bb"></div><div class="a" style="left:0px;top:729px;width:1096px;height:16px;background:#0000bb"></div><div class="a" style="left:0px;top:745px;width:1096px;height:16px;background:#0000bb"></div><div class="a" style="left:0px;top:761px;width:1096px;height:16px;background:#0000bb"></div><div class="a" style="left:0px;top:777px;width:1096px;height:16px;background:#0000bb"></div><div class="a" style="left:0px;top:793px;width:1096px;height:16px;background:#0000bb"></div><div class="a" style="left:0px;top:809px;width:1096px;height:16px;background:#0000bb"></div><div class="a" style="left:0px;top:825px;width:1096px;height:16px;background:#0000bb"></div><div class="a" style="left:384px;top:857px;width:8px;height:16px;background:#00ff00"></div><div class="a" style="left:1072px;top:857px;width:24px;height:16px;background:#0000bb"></div><div class="a" style="left:16px;top:873px;width:88px;height:16px;background:#00bbbb"></div><div class="a" style="left:120px;top:873px;width:88px;height:16px;background:#00bbbb"></div><div class="a" style="left:224px;top:873px;width:96px;height:16px;background:#00bbbb"></div><div class="a" style="left:336px;top:873px;width:96px;height:16px;background:#00bbbb"></div><div class="a" style="left:448px;top:873px;width:96px;height:16px;background:#00bbbb"></div><div class="a" style="left:560px;top:873px;width:88px;height:16px;background:#00bbbb"></div><div class="a" style="left:664px;top:873px;width:96px;height:16px;background:#00bbbb"></div><div class="a" style="left:776px;top:873px;width:96px;height:16px;background:#00bbbb"></div><div class="a" style="left:888px;top:873px;width:96px;height:16px;background:#00bbbb"></div><div class="a" style="left:1000px;top:873px;width:96px;height:16px;background:#00bbbb"></div>
<style>.tr{font-size:12px;letter-spacing:0.8px;line-height:16px;height:16px;padding-top:2px}</style>
<div class="t m tr" style="left:16px;top:329px;color:#000000">Lewy     Plik     Polecenie     Opcje     Prawy</div><div class="t m tr" style="left:8px;top:345px;color:#bbbbbb">&lt;</div><div class="t m tr" style="left:32px;top:345px;color:#000000">/etc/openhab2/services</div><div class="t m tr" style="left:496px;top:345px;color:#bbbbbb">.[^]&gt;  &lt;  /home/openhabian                                           .[^]&gt;</div><div class="t m tr" style="left:8px;top:361px;color:#ffff55">.n</div><div class="t m tr" style="left:168px;top:361px;color:#ffff55">Nazwa</div><div class="t m tr" style="left:368px;top:361px;color:#ffff55">Rozmiar</div><div class="t m tr" style="left:440px;top:361px;color:#ffff55">Modyfikacja</div><div class="t m tr" style="left:552px;top:361px;color:#ffff55">.n</div><div class="t m tr" style="left:712px;top:361px;color:#ffff55">Nazwa</div><div class="t m tr" style="left:920px;top:361px;color:#ffff55">Rozmiar</div><div class="t m tr" style="left:992px;top:361px;color:#ffff55">Modyfikacja</div><div class="t m tr" style="left:8px;top:377px;color:#ffffff">/..</div><div class="t m tr" style="left:368px;top:377px;color:#ffffff">NADRZĘD</div><div class="t m tr" style="left:432px;top:377px;color:#ffffff">15 sie, 12:28</div><div class="t m tr" style="left:552px;top:377px;color:#ffffff">/..</div><div class="t m tr" style="left:920px;top:377px;color:#ffffff">NADRZĘD</div><div class="t m tr" style="left:984px;top:377px;color:#ffffff">15 sie, 11:58</div><div class="t m tr" style="left:16px;top:393px;color:#bbbbbb">addons.cfg                                     2269   17 gru 2018</div><div class="t m tr" style="left:552px;top:393px;color:#ffffff">/.config</div><div class="t m tr" style="left:944px;top:393px;color:#ffffff">4096</div><div class="t m tr" style="left:984px;top:393px;color:#ffffff">15 sie, 12:17</div><div class="t m tr" style="left:16px;top:409px;color:#bbbbbb">dashboard.cfg                                 47382 15 sie, 12:37</div><div class="t m tr" style="left:552px;top:409px;color:#ffffff">/.gnupg</div><div class="t m tr" style="left:944px;top:409px;color:#ffffff">4096</div><div class="t m tr" style="left:984px;top:409px;color:#ffffff">15 sie, 12:07</div><div class="t m tr" style="left:16px;top:425px;color:#bbbb00">readme.txt</div><div class="t m tr" style="left:400px;top:425px;color:#bbbb00">333</div><div class="t m tr" style="left:448px;top:425px;color:#bbbb00">17 gru 2018</div><div class="t m tr" style="left:552px;top:425px;color:#ffffff">/.hawtjni</div><div class="t m tr" style="left:944px;top:425px;color:#ffffff">4096</div><div class="t m tr" style="left:984px;top:425px;color:#ffffff">16 sie, 05:59</div><div class="t m tr" style="left:16px;top:441px;color:#000000">runtime.cfg                                    2986   17 gru 2018</div><div class="t m tr" style="left:552px;top:441px;color:#ffffff">/.ssh</div><div class="t m tr" style="left:944px;top:441px;color:#ffffff">4096</div><div class="t m tr" style="left:984px;top:441px;color:#ffffff">15 sie, 12:29</div><div class="t m tr" style="left:552px;top:457px;color:#ffffff">/.vim</div><div class="t m tr" style="left:944px;top:457px;color:#ffffff">4096</div><div class="t m tr" style="left:984px;top:457px;color:#ffffff">15 sie, 12:29</div><div class="t m tr" style="left:560px;top:473px;color:#bbbbbb">.bash_history                                    876 16 sie, 07:12</div><div class="t m tr" style="left:560px;top:489px;color:#bbbbbb">.bash_logout                                     220 10 lip, 02:07</div><div class="t m tr" style="left:560px;top:505px;color:#bbbbbb">.bash_profile                                   2360 15 sie, 12:22</div><div class="t m tr" style="left:560px;top:521px;color:#bbbbbb">.bashrc                                         3523 10 lip, 02:07</div><div class="t m tr" style="left:560px;top:537px;color:#bbbbbb">.profile                                         807 10 lip, 02:07</div><div class="t m tr" style="left:560px;top:553px;color:#bbbb00">README.txt</div><div class="t m tr" style="left:960px;top:553px;color:#bbbb00">89</div><div class="t m tr" style="left:984px;top:553px;color:#bbbb00">15 sie, 12:29</div><div class="t m tr" style="left:16px;top:809px;color:#bbbbbb">runtime.cfg                                                        NADRZĘD</div><div class="t m tr" style="left:416px;top:825px;color:#bbbbbb">12G/14G (83%)                                                        12G/14G (83%)</div><div class="t m tr" style="left:0px;top:841px;color:#bbbbbb">Porada: uzupełnianie: M-Tab (lub Esc+Tab). Dwukrotne naciśnięcie wywołuje listę.</div><div class="t m tr" style="left:0px;top:857px;color:#bbbbbb">[12:33:11] root@openhab:/etc/openhab2/services#</div><div class="t m tr" style="left:1072px;top:857px;color:#bbbbbb">[^]</div><div class="t m tr" style="left:8px;top:873px;color:#ffffff">1</div><div class="t m tr" style="left:16px;top:873px;color:#000000">Pomoc</div><div class="t m tr" style="left:112px;top:873px;color:#ffffff">2</div><div class="t m tr" style="left:120px;top:873px;color:#000000">Menu</div><div class="t m tr" style="left:216px;top:873px;color:#ffffff">3</div><div class="t m tr" style="left:224px;top:873px;color:#000000">Podgld</div><div class="t m tr" style="left:328px;top:873px;color:#ffffff">4</div><div class="t m tr" style="left:336px;top:873px;color:#000000">Edycja</div><div class="t m tr" style="left:440px;top:873px;color:#ffffff">5</div><div class="t m tr" style="left:448px;top:873px;color:#000000">Kopiuj</div><div class="t m tr" style="left:552px;top:873px;color:#ffffff">6</div><div class="t m tr" style="left:560px;top:873px;color:#000000">Przen</div><div class="t m tr" style="left:656px;top:873px;color:#ffffff">7</div><div class="t m tr" style="left:664px;top:873px;color:#000000">UtwKat</div><div class="t m tr" style="left:768px;top:873px;color:#ffffff">8</div><div class="t m tr" style="left:776px;top:873px;color:#000000">Usuń</div><div class="t m tr" style="left:880px;top:873px;color:#ffffff">9</div><div class="t m tr" style="left:888px;top:873px;color:#000000">WDół</div><div class="t m tr" style="left:984px;top:873px;color:#ffffff">10</div><div class="t m tr" style="left:1000px;top:873px;color:#000000">Kończ</div>
<div class="a" style="left:4px;top:353px;width:1px;height:481px;background:#bbbbbb"></div><div class="a" style="left:540px;top:353px;width:1px;height:481px;background:#bbbbbb"></div><div class="a" style="left:548px;top:353px;width:1px;height:481px;background:#bbbbbb"></div><div class="a" style="left:1092px;top:353px;width:1px;height:481px;background:#bbbbbb"></div><div class="a" style="left:4px;top:353px;width:4px;height:1px;background:#bbbbbb"></div><div class="a" style="left:16px;top:353px;width:8px;height:1px;background:#bbbbbb"></div><div class="a" style="left:216px;top:353px;width:280px;height:1px;background:#bbbbbb"></div><div class="a" style="left:536px;top:353px;width:5px;height:1px;background:#bbbbbb"></div><div class="a" style="left:548px;top:353px;width:4px;height:1px;background:#bbbbbb"></div><div class="a" style="left:560px;top:353px;width:8px;height:1px;background:#bbbbbb"></div><div class="a" style="left:712px;top:353px;width:336px;height:1px;background:#bbbbbb"></div><div class="a" style="left:1088px;top:353px;width:5px;height:1px;background:#bbbbbb"></div><div class="a" style="left:364px;top:361px;width:1px;height:432px;background:#bbbbbb"></div><div class="a" style="left:428px;top:361px;width:1px;height:432px;background:#bbbbbb"></div><div class="a" style="left:916px;top:361px;width:1px;height:432px;background:#bbbbbb"></div><div class="a" style="left:980px;top:361px;width:1px;height:432px;background:#bbbbbb"></div><div class="a" style="left:4px;top:801px;width:537px;height:1px;background:#bbbbbb"></div><div class="a" style="left:548px;top:801px;width:545px;height:1px;background:#bbbbbb"></div><div class="a" style="left:4px;top:833px;width:404px;height:1px;background:#bbbbbb"></div><div class="a" style="left:528px;top:833px;width:13px;height:1px;background:#bbbbbb"></div><div class="a" style="left:548px;top:833px;width:412px;height:1px;background:#bbbbbb"></div><div class="a" style="left:1080px;top:833px;width:13px;height:1px;background:#bbbbbb"></div>
<div class="a" style="left:364px;top:441px;width:1px;height:16px;background:#003030"></div>
<div class="a" style="left:428px;top:441px;width:1px;height:16px;background:#003030"></div>
<div class="a" style="left:1097px;top:329px;width:1px;height:569px;background:#000"></div>
<div class="a" style="left:0px;top:898px;width:1097px;height:15px;background:#f0f0f0"></div>
<div class="a" style="left:118px;top:901px;width:1px;height:12px;background:#d7d7d7"></div>
<div class="a" style="left:238px;top:901px;width:1px;height:12px;background:#d7d7d7"></div>
<div class="t" style="left:1px;top:905px;font-size:12px;letter-spacing:-0.33px;color:#000">05:13:51 Connected</div>
<div class="t" style="left:123px;top:905px;font-size:12px;color:#000">SSH/22</div>
</body></html>
